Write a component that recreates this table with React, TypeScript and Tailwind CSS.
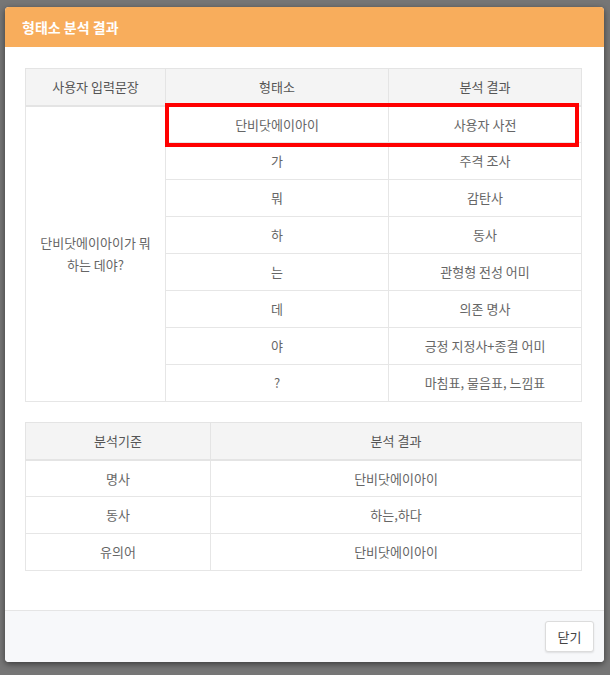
import React from "react";

const morphemes = [
  ["단비닷에이아이", "사용자 사전"],
  ["가", "주격 조사"],
  ["뭐", "감탄사"],
  ["하", "동사"],
  ["는", "관형형 전성 어미"],
  ["데", "의존 명사"],
  ["야", "긍정 지정사+종결 어미"],
  ["?", "마침표, 물음표, 느낌표"],
];

const summary = [
  ["명사", "단비닷에이아이"],
  ["동사", "하는,하다"],
  ["유의어", "단비닷에이아이"],
];

const th = "h-[37px] border border-[#e4e4e4] bg-[#f4f4f4] text-center font-normal text-[#555] border-b-2";
const td = "h-[37px] border border-[#e6e6e6] text-center text-[#666]";

export default function App() {
  return (
    <div
      className="min-h-[675px] w-[610px] bg-[#767676] pt-[7px] pl-[5px]"
      style={{ fontFamily: '"Noto Sans CJK KR", "Noto Sans", sans-serif' }}
    >
      <div className="flex h-[655px] w-[599px] flex-col overflow-hidden rounded-[4px] bg-white shadow-[0_2px_6px_rgba(0,0,0,0.5)]">
        {/* header */}
        <div className="flex h-[40px] items-center bg-[#f8ad5c] px-[17px] text-[14px] font-bold text-white">
          형태소 분석 결과
        </div>

        {/* body */}
        <div className="flex-1 px-[20px] pt-[21px]">
          <div className="relative">
            <table className="w-[557px] table-fixed border-collapse text-[13px]">
              <colgroup>
                <col className="w-[140px]" />
                <col className="w-[223px]" />
                <col />
              </colgroup>
              <thead>
                <tr>
                  <th className={th}>사용자 입력문장</th>
                  <th className={th}>형태소</th>
                  <th className={th}>분석 결과</th>
                </tr>
              </thead>
              <tbody>
                {morphemes.map(([m, r], i) => (
                  <tr key={i}>
                    {i === 0 && (
                      <td rowSpan={8} className={td + " px-2 leading-[22px]"}>
                        단비닷에이아이가 뭐
                        <br />
                        하는 데야?
                      </td>
                    )}
                    <td className={td}>{m}</td>
                    <td className={td}>{r}</td>
                  </tr>
                ))}
              </tbody>
            </table>
            {/* highlight box */}
            <div className="absolute left-[140px] top-[35px] h-[44px] w-[414px] border-4 border-[#ff0000]" />
          </div>

          <table className="mt-[20px] w-[557px] table-fixed border-collapse text-[13px]">
            <colgroup>
              <col className="w-[185px]" />
              <col />
            </colgroup>
            <thead>
              <tr>
                <th className={th}>분석기준</th>
                <th className={th}>분석 결과</th>
              </tr>
            </thead>
            <tbody>
              {summary.map(([k, v]) => (
                <tr key={k}>
                  <td className={td}>{k}</td>
                  <td className={td}>{v}</td>
                </tr>
              ))}
            </tbody>
          </table>
        </div>

        {/* footer */}
        <div className="flex h-[52px] items-center justify-end border-t border-[#e5e5e5] bg-[#f7f8fa] pr-[10px]">
          <button className="h-[31px] w-[49px] rounded-[3px] border border-[#dcdcdc] bg-white text-[13px] text-[#444] shadow-[0_1px_2px_rgba(0,0,0,0.1)]">
            닫기
          </button>
        </div>
      </div>
    </div>
  );
}
